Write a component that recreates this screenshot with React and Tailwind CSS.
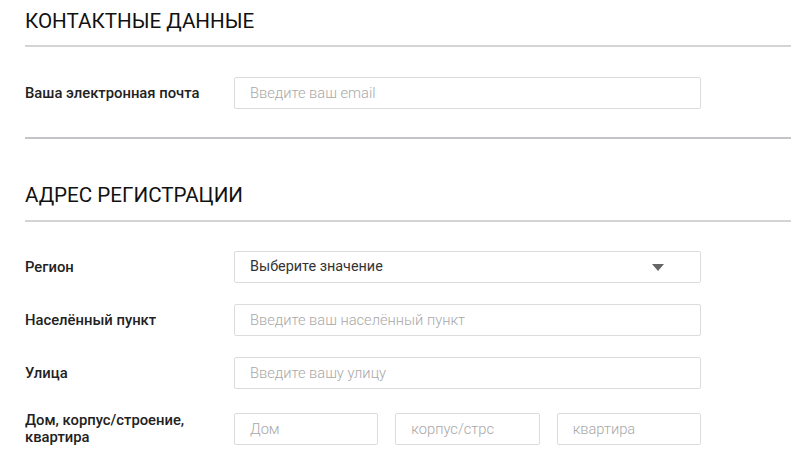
import React from "react";

const font = { fontFamily: "Roboto, 'Noto Sans', sans-serif" };

function Field({ placeholder }) {
  return (
    <input
      type="text"
      placeholder={placeholder}
      className="h-[32px] w-full rounded-[2px] border border-[#dcdcdc] bg-white px-[15px] text-[14.7px] font-light text-[#333] outline-none placeholder:text-[#a8a8a8]"
    />
  );
}

function Row({ label, children, className = "" }) {
  return (
    <div className={"flex items-center " + className}>
      <div className="w-[209px] shrink-0 pr-[16px] text-[14.8px] font-medium leading-[17px] text-[#222]">
        {label}
      </div>
      <div className="w-[467px]">{children}</div>
    </div>
  );
}

export default function App() {
  return (
    <div className="min-h-[473px] bg-white pl-[25px] pr-[9px] pt-[9px]" style={font}>
      <h2 className="h-[24px] text-[20.6px] font-normal leading-[24px] text-[#111]">
        КОНТАКТНЫЕ ДАННЫЕ
      </h2>
      <div className="mt-[12px] h-[2px] bg-[#d4d4d4]" />
      <div className="mt-[30px]">
        <Row label="Ваша электронная почта">
          <Field placeholder="Введите ваш email" />
        </Row>
      </div>
      <div className="mt-[28px] h-[2px] bg-[#c4c4c8]" />

      <h2 className="mt-[44px] h-[24px] text-[20.6px] font-normal leading-[24px] text-[#111]">
        АДРЕС РЕГИСТРАЦИИ
      </h2>
      <div className="mt-[13px] h-[2px] bg-[#d4d4d4]" />

      <div className="mt-[29px] flex flex-col gap-[21px]">
        <Row label="Регион">
          <div className="flex h-[32px] w-full items-center justify-between rounded-[2px] border border-[#dcdcdc] bg-white pl-[15px] pr-[36px] text-[14.4px] text-[#333]">
            <span>Выберите значение</span>
            <svg width="12" height="7" viewBox="0 0 12 7">
              <path d="M0 0 H12 L6 7 Z" fill="#666" />
            </svg>
          </div>
        </Row>
        <Row label="Населённый пункт">
          <Field placeholder="Введите ваш населённый пункт" />
        </Row>
        <Row label="Улица">
          <Field placeholder="Введите вашу улицу" />
        </Row>
        <Row label="Дом, корпус/строение, квартира" className="mt-[2px]">
          <div className="grid grid-cols-3 gap-[17px]">
            <Field placeholder="Дом" />
            <Field placeholder="корпус/стрс" />
            <Field placeholder="квартира" />
          </div>
        </Row>
      </div>
    </div>
  );
}
